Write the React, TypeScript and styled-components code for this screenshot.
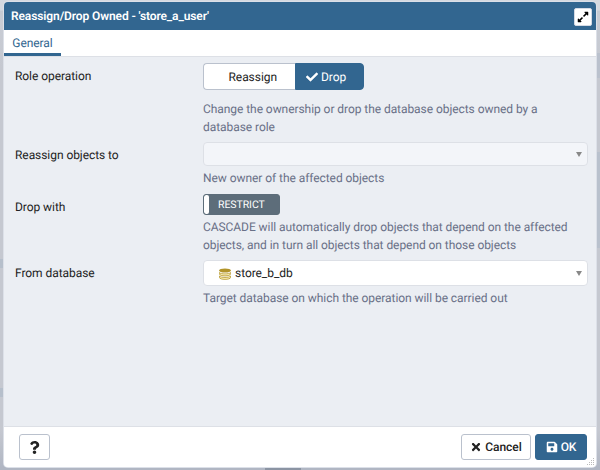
import React from "react";
import styled, { createGlobalStyle } from "styled-components";
import { FaCheck, FaTimes, FaSave, FaQuestion, FaExpandAlt } from "react-icons/fa";

const GlobalStyle = createGlobalStyle`
  *, *::before, *::after { box-sizing: border-box; }
  body { margin: 0; overflow: hidden; font-family: Roboto, "Liberation Sans", sans-serif; letter-spacing: -0.06px; text-rendering: geometricPrecision; }
  button { font-family: inherit; letter-spacing: inherit; margin: 0; padding: 0; text-rendering: inherit; }
`;

const Backdrop = styled.div`
  position: relative;
  width: 600px;
  height: 470px;
  padding: 2px 4px 3px 4px;
  background:
    linear-gradient(#8b94a3, #8b94a3) 265px 468px / 36px 2px no-repeat,
    linear-gradient(90deg, transparent 590px, #bac1cd 590px) 0 53px / 100% 25px no-repeat,
    linear-gradient(90deg, transparent 590px, #b9c1cd 590px) 0 152px / 100% 96px no-repeat,
    linear-gradient(90deg, #b6bfcb 5px, transparent 5px) 0 259px / 100% 9px no-repeat,
    linear-gradient(90deg, #b6bfcb 5px, transparent 5px) 0 388px / 100% 9px no-repeat,
    linear-gradient(#d5d9e0 0, #d5d9e0 10px, #c5cad2 11px, #c8ccd4 22px, #c5c8d0 70px, #c5c8d0 430px, #b0b6c3 468px);
`;

const Dialog = styled.section`
  height: 465px;
  display: flex;
  flex-direction: column;
  overflow: hidden;
  border-radius: 4px;
  background: #ebeef3;
  box-shadow: 0 0 0 1px #dce0e8;
  position: relative;
`;

const Header = styled.header`
  flex: 0 0 28px;
  display: flex;
  align-items: center;
  justify-content: space-between;
  padding: 0 4px 0 7px;
  background: #326690;
  color: #fff;
`;

const Title = styled.h1`
  margin: 0;
  font-size: 12px;
  line-height: 16px;
  font-weight: 600;
  letter-spacing: -0.11px;
  white-space: nowrap;
`;

const ExpandButton = styled.button`
  width: 18px;
  height: 18px;
  margin-top: 2px;
  display: grid;
  place-items: center;
  border: 1px solid #d5dae4;
  border-radius: 2px;
  background: #fff;
  color: #000;
`;

const Tabs = styled.nav`
  flex: 0 0 27px;
  display: flex;
  background: #fff;
  border-bottom: 1px solid #dde0e6;
`;

const Tab = styled.button`
  width: 57px;
  height: 26px;
  padding-top: 3px;
  border: 0;
  border-bottom: 3px solid #326690;
  background: transparent;
  color: #326690;
  font-size: 12px;
  line-height: 20px;
`;

const Form = styled.main`
  flex: 1;
  padding: 6px 8px 0 11px;
`;

const Field = styled.div<{ $height: number }>`
  display: grid;
  grid-template-columns: 188px 1fr;
  height: ${(p) => p.$height}px;
`;

const Label = styled.label`
  font-size: 12px;
  line-height: 26px;
  color: #222;
`;

const Control = styled.div`
  min-width: 0;
`;

const Help = styled.p<{ $gap?: number }>`
  margin: ${(p) => p.$gap ?? 3}px 0 0;
  font-size: 12px;
  line-height: 18px;
  color: #697087;
  white-space: nowrap;
`;

const Segments = styled.div`
  display: flex;
  width: 161px;
  height: 27px;
`;

const Segment = styled.button<{ $active?: boolean }>`
  width: ${(p) => (p.$active ? 69 : 92)}px;
  display: flex;
  align-items: center;
  justify-content: ${(p) => (p.$active ? "flex-start" : "flex-end")};
  gap: 3px;
  padding: ${(p) => (p.$active ? "0 0 0 10px" : "0 18px 0 0")};
  border: 1px solid ${(p) => (p.$active ? "#326690" : "#bac1cd")};
  border-right-width: ${(p) => (p.$active ? 1 : 0)}px;
  border-radius: ${(p) => (p.$active ? "0 4px 4px 0" : "4px 0 0 4px")};
  background: ${(p) => (p.$active ? "#326690" : "#fff")};
  color: ${(p) => (p.$active ? "#fff" : "#222")};
  font-size: 12px;
`;

const Select = styled.div<{ $disabled?: boolean }>`
  display: flex;
  align-items: center;
  height: ${(p) => (p.$disabled ? 24 : 26)}px;
  width: 385px;
  padding: 0 5px 0 15px;
  border: 1px solid #dde0e6;
  border-radius: 4px;
  background: ${(p) => (p.$disabled ? "#f3f5f9" : "#fff")};
  color: #222;
  font-size: 12px;
`;

const Caret = styled.span`
  margin-left: auto;
  border: 3.5px solid transparent;
  border-top: 5px solid #888;
  border-bottom: 0;
`;

const DatabaseIcon = styled.svg`
  width: 12px;
  height: 12px;
  margin: 2px 4px 0 0;
`;

const Switch = styled.button`
  display: flex;
  width: 77px;
  height: 21px;
  padding: 0;
  border: 1px solid #5d6d7a;
  border-radius: 3px;
  overflow: hidden;
  background: #5d6d7a;
  color: #fff;
  font-size: 10.5px;
  line-height: 20px;
`;

const SwitchHandle = styled.span`
  width: 5px;
  height: 19px;
  margin-right: 9px;
  border-radius: 2px;
  background: #fff;
`;

const Footer = styled.footer`
  flex: 0 0 41px;
  display: flex;
  align-items: center;
  gap: 4px;
  padding: 0 9px 0 15px;
  border-top: 1px solid #dde0e6;
  background: #fff;
`;

const Button = styled.button<{ $width: number; $primary?: boolean }>`
  width: ${(p) => p.$width}px;
  height: 26px;
  display: flex;
  align-items: center;
  justify-content: center;
  gap: 3px;
  border: 1px solid ${(p) => (p.$primary ? "#326690" : "#bac1cd")};
  border-radius: 3px;
  background: ${(p) => (p.$primary ? "#326690" : "#fff")};
  color: ${(p) => (p.$primary ? "#fff" : "#222")};
  font-size: 12px;
  font-weight: 500;
`;

const Spacer = styled.span`
  flex: 1;
`;

const Grip = styled.svg`
  position: absolute;
  right: 1px;
  bottom: 1px;
  width: 8px;
  height: 8px;
`;

export default function App() {
  return (
    <Backdrop>
      <GlobalStyle />
      <Dialog>
        <Header>
          <Title>Reassign/Drop Owned - 'store_a_user'</Title>
          <ExpandButton aria-label="Maximize"><FaExpandAlt size={12} /></ExpandButton>
        </Header>
        <Tabs><Tab>General</Tab></Tabs>
        <Form>
          <Field $height={79}>
            <Label>Role operation</Label>
            <Control>
              <Segments>
                <Segment>Reassign</Segment>
                <Segment $active><FaCheck size={12} />Drop</Segment>
              </Segments>
              <Help $gap={10}>
                Change the ownership or drop the database objects owned by a<br />
                database role
              </Help>
            </Control>
          </Field>
          <Field $height={52}>
            <Label>Reassign objects to</Label>
            <Control>
              <Select $disabled><Caret /></Select>
              <Help>New owner of the affected objects</Help>
            </Control>
          </Field>
          <Field $height={66}>
            <Label>Drop with</Label>
            <Control>
              <Switch><SwitchHandle />RESTRICT</Switch>
              <Help>
                CASCADE will automatically drop objects that depend on the affected<br />
                objects, and in turn all objects that depend on those objects
              </Help>
            </Control>
          </Field>
          <Field $height={50}>
            <Label>From database</Label>
            <Control>
              <Select>
                <DatabaseIcon viewBox="0 0 12 12">
                  <path d="M.4 8v1.4c0 2.6 11.2 2.6 11.2 0V8c-1 1.9-10.2 1.9-11.2 0Z" fill="#fff3b8" stroke="#b2942a" strokeWidth=".8" />
                  <path d="M.4 4.5v1.4c0 2.6 11.2 2.6 11.2 0V4.5c-1 1.9-10.2 1.9-11.2 0Z" fill="#fff3b8" stroke="#b2942a" strokeWidth=".8" />
                  <ellipse cx="6" cy="2.5" rx="6" ry="2" fill="#b2942a" />
                </DatabaseIcon>
                store_b_db<Caret />
              </Select>
              <Help>Target database on which the operation will be carried out</Help>
            </Control>
          </Field>
        </Form>
        <Footer>
          <Button $width={31} aria-label="Help"><FaQuestion size={13} /></Button>
          <Spacer />
          <Button $width={70}><FaTimes size={12} />Cancel</Button>
          <Button $width={52} $primary><FaSave size={12} />OK</Button>
        </Footer>
        <Grip viewBox="0 0 8 8" fill="#bbb">
          <path d="M6 0h1v1H6zM4 2h1v1H4zM6 2h1v1H6zM2 4h1v1H2zM4 4h1v1H4zM6 4h1v1H6zM0 6h1v1H0zM2 6h1v1H2zM4 6h1v1H4zM6 6h1v1H6z" />
        </Grip>
      </Dialog>
    </Backdrop>
  );
}
